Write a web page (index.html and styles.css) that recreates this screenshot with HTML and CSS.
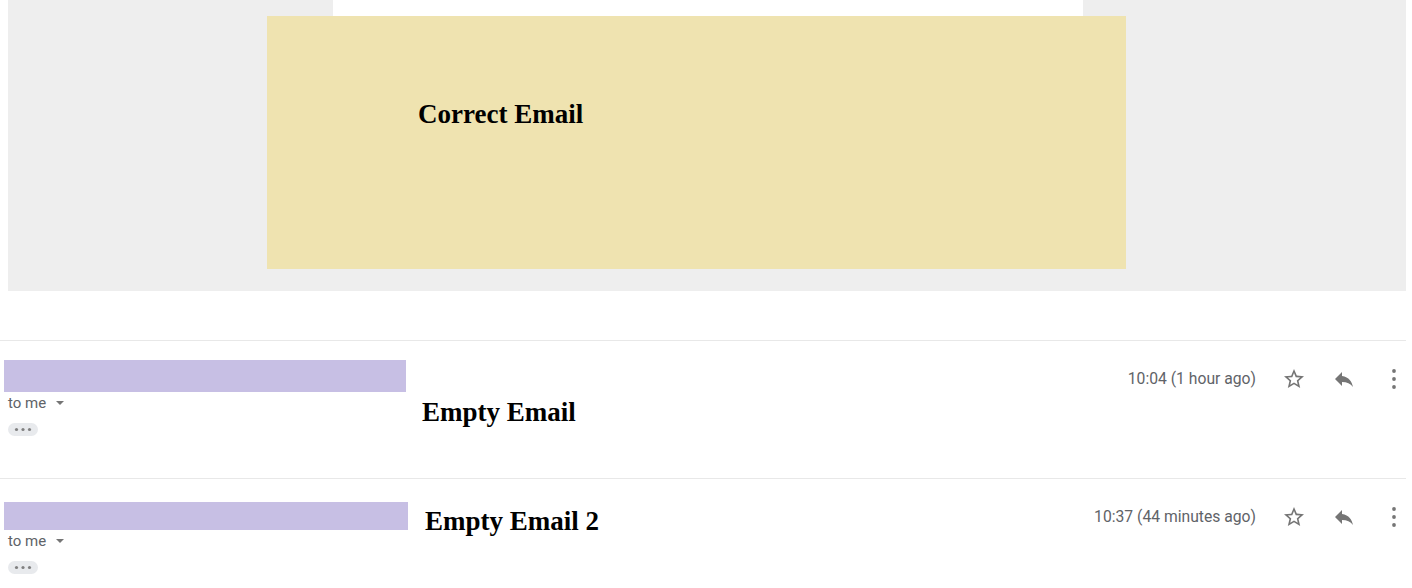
FILE: index.html
```html
<!DOCTYPE html>
<html lang="en">
<head>
  <meta charset="UTF-8" />
  <meta name="viewport" content="width=device-width, initial-scale=1" />
  <title>Inbox preview</title>
  <link rel="stylesheet" href="styles.css">
</head>
<body>

  <div class="page">
    <div class="preview">
      <div class="preview-strip"></div>
      <div class="preview-card">
        <h2 class="subject">Correct Email</h2>
      </div>
    </div>

    <div class="spacer"></div>

    <div class="message message-one">
      <div class="sender">
        <div class="sender-bar"></div>
        <div class="recipient">to me <span class="caret"></span></div>
        <div class="more-pill">
          <svg width="30" height="13" viewBox="0 0 30 13"><circle cx="8.5" cy="6.5" r="1.6"/><circle cx="15" cy="6.5" r="1.6"/><circle cx="21.5" cy="6.5" r="1.6"/></svg>
        </div>
      </div>
      <h2 class="subject">Empty Email</h2>
      <div class="meta">
        <span class="time">10:04 (1 hour ago)</span>
        <svg class="icon" viewBox="0 0 24 24"><path d="M22 9.24l-7.19-.62L12 2 9.19 8.63 2 9.24l5.46 4.73L5.82 21 12 17.27 18.18 21l-1.63-7.03L22 9.24zM12 15.4l-3.76 2.27 1-4.28-3.32-2.88 4.38-.38L12 6.1l1.71 4.04 4.38.38-3.32 2.88 1 4.28L12 15.4z"/></svg>
        <svg class="icon" viewBox="0 0 24 24"><path d="M10 9V5l-7 7 7 7v-4.1c5 0 8.5 1.6 11 5.1-1-5-4-10-11-11z"/></svg>
        <svg class="icon" viewBox="0 0 24 24"><circle cx="12" cy="4" r="1.9"/><circle cx="12" cy="12" r="1.9"/><circle cx="12" cy="20" r="1.9"/></svg>
      </div>
    </div>

    <div class="message message-two">
      <div class="sender">
        <div class="sender-bar"></div>
        <div class="recipient">to me <span class="caret"></span></div>
        <div class="more-pill">
          <svg width="30" height="13" viewBox="0 0 30 13"><circle cx="8.5" cy="6.5" r="1.6"/><circle cx="15" cy="6.5" r="1.6"/><circle cx="21.5" cy="6.5" r="1.6"/></svg>
        </div>
      </div>
      <h2 class="subject">Empty Email 2</h2>
      <div class="meta">
        <span class="time">10:37 (44 minutes ago)</span>
        <svg class="icon" viewBox="0 0 24 24"><path d="M22 9.24l-7.19-.62L12 2 9.19 8.63 2 9.24l5.46 4.73L5.82 21 12 17.27 18.18 21l-1.63-7.03L22 9.24zM12 15.4l-3.76 2.27 1-4.28-3.32-2.88 4.38-.38L12 6.1l1.71 4.04 4.38.38-3.32 2.88 1 4.28L12 15.4z"/></svg>
        <svg class="icon" viewBox="0 0 24 24"><path d="M10 9V5l-7 7 7 7v-4.1c5 0 8.5 1.6 11 5.1-1-5-4-10-11-11z"/></svg>
        <svg class="icon" viewBox="0 0 24 24"><circle cx="12" cy="4" r="1.9"/><circle cx="12" cy="12" r="1.9"/><circle cx="12" cy="20" r="1.9"/></svg>
      </div>
    </div>
  </div>

</body>
</html>
```

FILE: styles.css
```css
body {
  margin: 0;
  background: #fff;
  font-family: Roboto, Arial, sans-serif;
}
.page {
  width: 1406px;
}
.preview {
  margin-left: 8px;
  height: 291px;
  background: #eeeeee;
}
.preview-strip {
  margin-left: 325px;
  width: 750px;
  height: 16px;
  background: #fff;
}
.preview-card {
  margin-left: 259px;
  width: 859px;
  height: 253px;
  padding: 83px 0 0 151px;
  box-sizing: border-box;
  background: #efe3b0;
}
.subject {
  margin: 0;
  font-family: "Liberation Serif", "Times New Roman", serif;
  font-size: 27px;
  font-weight: bold;
  line-height: 30px;
  color: #000;
}
.spacer {
  height: 49px;
}
.message {
  display: flex;
  align-items: flex-start;
  border-top: 1px solid #e8e8e8;
  height: 137px;
}
.sender {
  padding-left: 4px;
}
.sender-bar {
  background: #c7bfe4;
}
.message-one .sender { padding-top: 19px; }
.message-one .sender-bar { width: 402px; height: 32px; }
.message-one .subject { margin: 56px 0 0 16px; }
.message-one .meta { margin-top: 26px; }

.message-two .sender { padding-top: 23px; }
.message-two .sender-bar { width: 404px; height: 28px; }
.message-two .subject { margin: 27px 0 0 17px; }
.message-two .meta { margin-top: 26px; }

.recipient {
  margin: 1px 0 0 4px;
  font-size: 15px;
  line-height: 20px;
  color: #5f6368;
  display: flex;
  align-items: center;
}
.caret {
  display: inline-block;
  margin-left: 10px;
  border-left: 4px solid transparent;
  border-right: 4px solid transparent;
  border-top: 4px solid #757575;
}
.more-pill {
  margin: 10px 0 0 4px;
  width: 30px;
  height: 13px;
  border-radius: 7px;
  background: #e8eaed;
}
.more-pill svg {
  display: block;
  fill: #808080;
}
.meta {
  margin-left: auto;
  display: flex;
  align-items: center;
  gap: 26px;
}
.time {
  font-size: 15.7px;
  line-height: 20px;
  color: #5f6368;
}
.icon {
  width: 24px;
  height: 24px;
  fill: #757575;
}
```
